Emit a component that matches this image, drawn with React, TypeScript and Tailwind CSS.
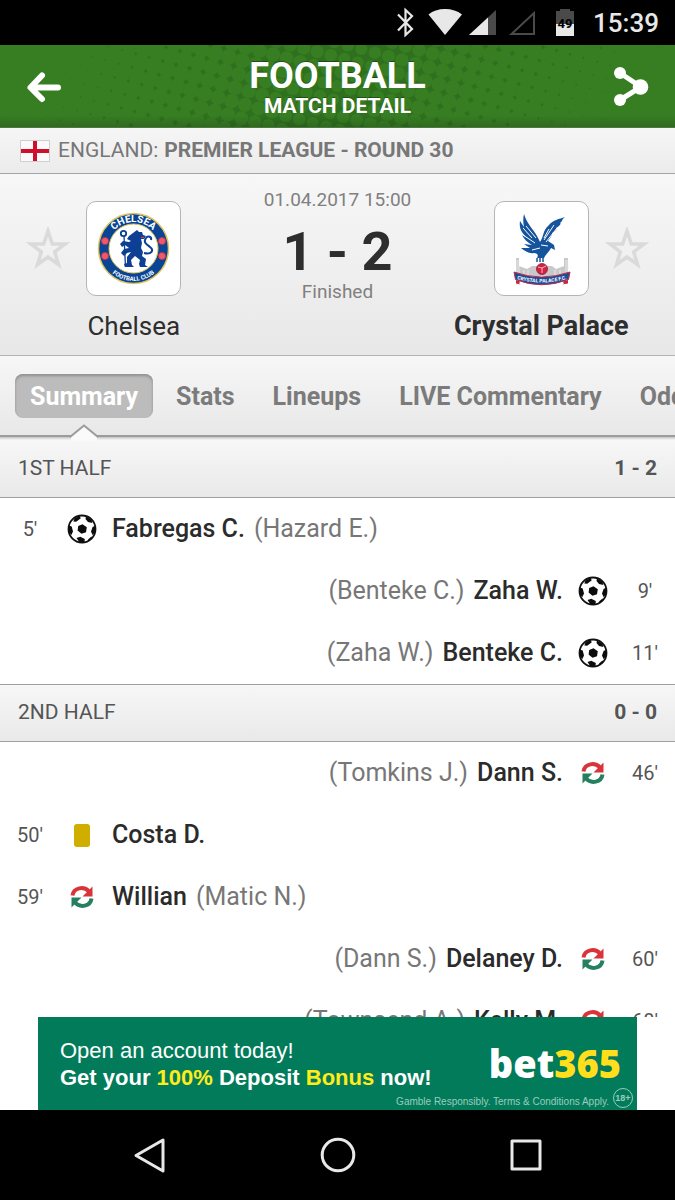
type EventKind = "goal" | "yellow" | "sub";

type MatchEvent = {
  minute: string;
  side: "home" | "away";
  kind: EventKind;
  player: string;
  other?: string;
};

const firstHalf: MatchEvent[] = [
  { minute: "5'", side: "home", kind: "goal", player: "Fabregas C.", other: "(Hazard E.)" },
  { minute: "9'", side: "away", kind: "goal", player: "Zaha W.", other: "(Benteke C.)" },
  { minute: "11'", side: "away", kind: "goal", player: "Benteke C.", other: "(Zaha W.)" },
];

const secondHalf: MatchEvent[] = [
  { minute: "46'", side: "away", kind: "sub", player: "Dann S.", other: "(Tomkins J.)" },
  { minute: "50'", side: "home", kind: "yellow", player: "Costa D." },
  { minute: "59'", side: "home", kind: "sub", player: "Willian", other: "(Matic N.)" },
  { minute: "60'", side: "away", kind: "sub", player: "Delaney D.", other: "(Dann S.)" },
  { minute: "68'", side: "away", kind: "sub", player: "Kelly M.", other: "(Townsend A.)" },
];

const tabs = ["Summary", "Stats", "Lineups", "LIVE Commentary", "Odds"];

// light dots on a dark ground, growing outwards until they close up
function headerDots() {
  const dots: { x: number; y: number; r: number }[] = [];
  const angle = (15 * Math.PI) / 180;
  for (let i = -30; i <= 30; i++) {
    for (let j = -14; j <= 14; j++) {
      const x = 337 + (i * Math.cos(angle) - j * Math.sin(angle)) * 14;
      const y = 41 + (i * Math.sin(angle) + j * Math.cos(angle)) * 14;
      if (x < -15 || x > 690 || y < -15 || y > 97) continue;
      dots.push({ x, y, r: Math.min(10.5, 6 + Math.abs(x - 337 - (41 - y) * 0.6) * 0.0135) });
    }
  }
  return dots;
}

function StatusBar() {
  return (
    <div className="flex h-[45px] shrink-0 items-center justify-end bg-black pr-4 text-[26px] leading-none font-medium text-[#e8e8e8]">
      <svg width="200" height="45" viewBox="0 0 200 45" aria-hidden="true">
        <path d="M6 14.500 20 29l-6.500 6V10l6.500 6L6 30.500" fill="none" stroke="#e8e8e8" strokeWidth="2.200" />
        <path d="M36.500 14.500Q43 9 53 9T70 14.500L53 35Z" fill="#e8e8e8" />
        <path d="M104 10v25H77z" fill="#4a4a4a" />
        <path d="M96 17.500V35H77z" fill="#e8e8e8" />
        <path d="M142 13v21h-22.500z" fill="none" stroke="#4a4a4a" strokeWidth="2" />
        <path d="M164 11h4V9h10v2h4v13h-18z" fill="#4a4a4a" />
        <path d="M164 24h18v12h-18z" fill="#e8e8e8" />
        <text x="173" y="28" textAnchor="middle" fontSize="13" fontWeight="700" fill="#000">49</text>
      </svg>
      <span className="ml-px">15:39</span>
    </div>
  );
}

function Header() {
  return (
    <header className="relative flex h-[83px] shrink-0 items-center justify-between overflow-hidden border-b border-[#4d7a42] bg-[#2f701f] px-6 text-white">
      <svg className="absolute inset-0 h-full w-full" viewBox="0 0 675 82" preserveAspectRatio="xMidYMid slice" aria-hidden="true">
        {headerDots().map((d, i) => (
          <circle key={i} cx={d.x} cy={d.y} r={d.r} fill="#377e23" />
        ))}
      </svg>
      <div className="absolute inset-x-0 bottom-0 h-3 bg-linear-to-b from-transparent to-black/15" />
      <button type="button" aria-label="Back" className="relative">
        <svg width="40" height="40" viewBox="0 0 40 40" fill="none" stroke="#fff" strokeWidth="6" strokeLinecap="round" strokeLinejoin="round">
          <path d="M34 21.500H7M18 9.500 6.500 21.500 18 33" />
        </svg>
      </button>
      <div className="relative pt-1 text-center font-bold text-shadow-[0_-1px_0_rgb(0_0_0/0.35)]">
        <h1 className="text-[36px] leading-9">FOOTBALL</h1>
        <p className="text-[21px] leading-6">MATCH DETAIL</p>
      </div>
      <button type="button" aria-label="Share" className="relative">
        <svg width="40" height="40" viewBox="0 0 40 40" fill="#fff">
          <path d="M9 7 30 21 9 34" fill="none" stroke="#fff" strokeWidth="5" />
          <circle cx="9" cy="7" r="6" />
          <circle cx="9" cy="34" r="6" />
          <circle cx="29.500" cy="21" r="7.800" />
        </svg>
      </button>
    </header>
  );
}

function Star({ team }: { team: string }) {
  return (
    <button type="button" aria-label={`Follow ${team}`}>
      <svg width="44" height="44" viewBox="0 0 44 44" fill="none" stroke="#dadada" strokeWidth="3.500">
        <path d="M22 4 26.300 17H39L28.700 24.800 32.500 37.500 22 30 11.500 37.500 15.300 24.800 5 17H17.700Z" />
      </svg>
    </button>
  );
}

function ChelseaCrest() {
  return (
    <svg width="93" height="93" viewBox="0 0 93 93" role="img" aria-label="Chelsea crest">
      <defs>
        <path id="che-top" d="M20 46.500a26.500 26.500 0 0 1 53 0" />
        <path id="che-bottom" d="M14 46.500a32.500 32.500 0 0 0 65 0" />
      </defs>
      <circle cx="46.500" cy="46.500" r="35" fill="#0a4595" stroke="#e0c65a" strokeWidth="1.500" />
      <circle cx="46.500" cy="46.500" r="24.500" fill="#fff" stroke="#e0c65a" strokeWidth="1" />
      <text fontSize="10" fontWeight="700" fill="#fff" textAnchor="middle">
        <textPath href="#che-top" startOffset="50%">CHELSEA</textPath>
      </text>
      <text fontSize="6" fontWeight="700" fill="#fff" textAnchor="middle">
        <textPath href="#che-bottom" startOffset="50%">FOOTBALL CLUB</textPath>
      </text>
      {[[18, 39], [18, 54], [75, 39], [75, 54]].map(([x, y]) => (
        <circle key={`${x}-${y}`} cx={x} cy={y} r="3.500" fill="#ee5a6b" stroke="#c9304c" strokeWidth="0.800" />
      ))}
      <g fill="#0d3f94">
        <path d="M46 31l4-3 2 2 3 0 1 3 3 1-2 3-3 0 1 4-1 5 2 4-1 4 4 3-1 6 3 2h-8l-1-3 1-4-5-4-4 4 1 5 2 2h-9l-1-3 3-1 0-6 4-5-4 1-3 3-3-3 3-4 5-1-4-3-3 2-2-3 3-3 6 1 2-1-4-2 2-3z" />
        <path d="M57 51c8 2 10-3 6-6s-7-5-4-9c2-3 6-1 5 2" fill="none" stroke="#0d3f94" strokeWidth="2" />
        <path d="M37 34 38.500 65" stroke="#0d3f94" strokeWidth="1.300" />
        <circle cx="36.500" cy="31.500" r="2.700" fill="none" stroke="#0d3f94" strokeWidth="1.800" />
      </g>
      <path d="M54 35.500l3 0" stroke="#e2404f" strokeWidth="1" />
    </svg>
  );
}

function PalaceCrest() {
  return (
    <svg width="93" height="93" viewBox="0 0 93 93" role="img" aria-label="Crystal Palace crest">
      <defs>
        <path id="cry-ribbon" d="M17 75.500Q46 85.500 77 75.500" />
      </defs>
      <path d="M21 56h3v8l8 3 5-3h20l4 3 8-3v-8h4v18H21z" fill="#c9c9cb" />
      <path d="M22 58v15M24 58v15M71 58v15M73 58v15M29 68v5M33 68v5M60 68v5M65 68v5" stroke="#f3f3f3" strokeWidth="0.700" />
      <g fill="#16539d">
        <path d="M29 12C32 23 40 28 45 40C49 35 47 29 54 23C58 18 64 17 70 15C66 18 68 19 65 21C67 21 64 25 61 26C63 27 59 30 57 31C58 33 54 37 53 39L59 43L60 48L56 46C54 50 51 52 49 56H42C44 53 42 51 39 51C34 52 30 49 26 46L35 46L29 42L37 43C32 40 29 37 27 33L33 36C26 31 24 26 25 19L29 25C28 20 28 16 29 12Z" />
      </g>
      <path d="M28 26l9 10M28 33l12 8M31 24l10 12M49 38l10-15M51 40l11-14M49 36l5-9M46 43l7 1M37 48l8-2" fill="none" stroke="#fff" strokeWidth="1" />
      <path d="M42 56v4M45 55v5M48 55v5" stroke="#16539d" strokeWidth="1.500" />
      <circle cx="47" cy="67" r="5.500" fill="#d3213f" stroke="#8e2038" strokeWidth="0.800" />
      <path d="M43 65l4 1 4-2M47 66v5" stroke="#fff" strokeWidth="0.700" fill="none" />
      <path d="M19 70Q46 80 75 70L73.500 77.500Q46 88 20.500 77.500Z" fill="#1b4e99" stroke="#c42744" strokeWidth="1" />
      <path d="M21 78l4 1.500-1 3 2 0-5-1zM73 78l-5 1.500 1 3-2 0 6-1z" fill="#c42744" />
      <text fontSize="5" fontWeight="700" fill="#fff" textAnchor="middle">
        <textPath href="#cry-ribbon" startOffset="50%">CRYSTAL PALACE F.C.</textPath>
      </text>
    </svg>
  );
}

function Ball() {
  return (
    <svg width="30" height="30" viewBox="0 0 30 30" role="img" aria-label="Goal">
      <circle cx="15" cy="15" r="13.500" fill="#fff" stroke="#111" strokeWidth="1.800" />
      <g fill="#0c0c0c">
        <path d="M15.500 10.300l4.300 2.900-.8 5-4.500 1.500-3.900-3.200.6-4.400z" />
        <path d="M7.500 4.500 12.500 2l1.300 2.200-4.600 3.600-2.900-.4zM19 2.500l5.500 3.200.8 3.300-4.300-1-2.500-3z" />
        <path d="M1.800 11.500l2.900 1 1.300 5-1.600 3.500-2.400-2.500zM28.300 12l-2.600.8-1.700 4.700 1.500 3.600 2.500-2.600z" />
        <path d="M9.500 24l3.800-1.300 4.500 2.300-.3 3.200-5 .2zM21 25.500l3.500-3 .6 1.500-3 2.800z" />
      </g>
    </svg>
  );
}

function SubIcon() {
  return (
    <svg width="24" height="24" viewBox="0 0 24 24" role="img" aria-label="Substitution">
      <path d="M2.500 10.500C3.500 2.500 14 .800 19 6.500" fill="none" stroke="#d8343a" strokeWidth="4" />
      <path d="M22.500 1.500v10H12.500z" fill="#d8343a" />
      <path d="M21.500 13.500C20.500 21.500 10 23.200 5 17.500" fill="none" stroke="#258060" strokeWidth="4" />
      <path d="M1.500 22.500v-10H11.500z" fill="#258060" />
    </svg>
  );
}

function EventIcon({ kind }: { kind: EventKind }) {
  if (kind === "goal") return <Ball />;
  if (kind === "sub") return <SubIcon />;
  return <span role="img" aria-label="Yellow card" className="h-[23px] w-4 rounded-[3px] bg-[#cfae00]" />;
}

function EventRow({ event }: { event: MatchEvent }) {
  const away = event.side === "away";
  return (
    <li className={away ? "flex h-[62px] flex-row-reverse items-center" : "flex h-[62px] items-center"}>
      <span className="w-[60px] text-center text-[20px] text-[#555]">{event.minute}</span>
      <span className="flex w-11 justify-center">
        <EventIcon kind={event.kind} />
      </span>
      <span className={away ? "flex flex-row-reverse gap-[9px] px-2 text-[25px]" : "flex gap-[9px] px-2 text-[25px]"}>
        <span className="font-medium text-[#2b2b2b]">{event.player}</span>
        {event.other && <span className="text-[#777]">{event.other}</span>}
      </span>
    </li>
  );
}

function Half({ title, score, events, ruled }: { title: string; score: string; events: MatchEvent[]; ruled?: boolean }) {
  return (
    <section>
      <div
        className={`flex h-[58px] items-center justify-between border-b border-[#a0a0a0] bg-linear-to-b from-[#f7f7f7] to-[#e9e9e9] px-[18px] text-[21px] text-[#555] ${ruled ? "border-t" : ""}`}
      >
        <h2>{title}</h2>
        <span className="font-bold">{score}</span>
      </div>
      <ul>
        {events.map((e) => (
          <EventRow key={e.minute} event={e} />
        ))}
      </ul>
    </section>
  );
}

function Banner() {
  return (
    <div className="flex h-[93px] shrink-0 justify-center bg-white px-[38px]">
      <a
        href="#bet365"
        className="flex w-full max-w-[600px] justify-between bg-[#027b5b] pl-[22px] font-['Liberation_Sans',Arial,sans-serif] text-[22px] leading-[27px] text-white"
      >
        <div className="pt-5 whitespace-nowrap">
          <p>Open an account today!</p>
          <p className="font-bold">
            Get your <span className="text-[#ffec1a]">100%</span> Deposit <span className="text-[#ffec1a]">Bonus</span> now!
          </p>
        </div>
        <div className="-ml-20 flex flex-col items-end justify-between pt-7 pr-1">
          <span className="pr-3 font-['Open_Sans',sans-serif] text-[38px] leading-9 font-extrabold">
            bet<span className="text-[#ffdf1b]">365</span>
          </span>
          <span className="flex items-center gap-1 pb-[2px] text-[10px] leading-none whitespace-nowrap text-[#9accbd]">
            Gamble Responsibly. Terms &amp; Conditions Apply.
            <span className="-mt-2 flex size-5 items-center justify-center rounded-full border border-[#9accbd] text-[9px] font-bold">18+</span>
          </span>
        </div>
      </a>
    </div>
  );
}

function NavBar() {
  return (
    <nav className="flex h-[90px] shrink-0 items-center justify-center gap-[148px] bg-black">
      <button type="button" aria-label="Back">
        <svg width="40" height="40" viewBox="0 0 40 40" fill="none" stroke="#e8e8e8" strokeWidth="3" strokeLinejoin="round">
          <path d="M33 5v31L6 20.500z" />
        </svg>
      </button>
      <button type="button" aria-label="Home">
        <svg width="40" height="40" viewBox="0 0 40 40" fill="none" stroke="#e8e8e8" strokeWidth="3">
          <circle cx="20" cy="20" r="15.800" />
        </svg>
      </button>
      <button type="button" aria-label="Recent apps">
        <svg width="40" height="40" viewBox="0 0 40 40" fill="none" stroke="#e8e8e8" strokeWidth="3" strokeLinejoin="round">
          <path d="M6 6h28v28H6z" />
        </svg>
      </button>
    </nav>
  );
}

function App() {
  return (
    <div className="flex h-screen flex-col overflow-hidden bg-white font-[Roboto,sans-serif]">
      <StatusBar />
      <Header />

      <div className="flex h-[46px] shrink-0 items-center border-b border-[#a5a5a5] bg-linear-to-b from-[#f6f6f6] to-[#ebebeb] px-5 text-[21px] whitespace-nowrap text-[#777]">
        <svg width="30" height="22" viewBox="0 0 30 22" className="mr-2" role="img" aria-label="England">
          <path d="M.5 .5h29v21H.5z" fill="#fafafa" stroke="#cfcfcf" />
          <path d="M15 1v20M1 11h28" stroke="#d0102a" strokeWidth="4" />
        </svg>
        <span className="mr-[6px]">ENGLAND:</span>
        <span className="font-bold">PREMIER LEAGUE - ROUND 30</span>
      </div>

      <div className="grid h-[182px] shrink-0 grid-cols-[1fr_140px_1fr] border-b border-[#b5b5b5] bg-linear-to-b from-[#f7f7f7] to-[#e8e8e8] pt-3 text-[#2e2e2e]">
        <div className="flex flex-col items-center pt-[15px]">
          <div className="flex items-center gap-4">
            <Star team="Chelsea" />
            <div className="rounded-[10px] border border-[#b5b5b5] bg-white">
              <ChelseaCrest />
            </div>
            <span className="w-11" />
          </div>
          <p className="mt-3 text-[26px] leading-9">Chelsea</p>
        </div>
        <div className="flex flex-col items-center whitespace-nowrap text-[#808080]">
          <p className="text-[19px] leading-7">01.04.2017 15:00</p>
          <p className="pt-[10px] text-[54px] leading-[56px] font-bold text-[#2e2e2e]">1 - 2</p>
          <p className="text-[19px] leading-6">Finished</p>
        </div>
        <div className="flex flex-col items-center pt-[15px]">
          <div className="flex items-center gap-4">
            <span className="w-11" />
            <div className="rounded-[10px] border border-[#b5b5b5] bg-white">
              <PalaceCrest />
            </div>
            <Star team="Crystal Palace" />
          </div>
          <p className="mt-3 text-[27px] leading-9 font-bold">Crystal Palace</p>
        </div>
      </div>

      <div className="flex h-[81px] shrink-0 items-center gap-2 overflow-x-clip border-b-2 border-[#9c9c9c] bg-linear-to-b from-[#f7f7f7] to-[#e8e8e8] pl-[15px] text-[25px] font-bold whitespace-nowrap text-[#7b7b7b]">
        {tabs.map((tab, i) =>
          i === 0 ? (
            <button key={tab} type="button" className="relative h-11 rounded-lg bg-[#bcbcbc] px-[15px] pt-[3px] text-white shadow-[inset_0_2px_3px_#8f8f8f]">
              {tab}
              <svg width="30" height="17" viewBox="0 0 30 17" className="absolute top-[50px] left-1/2 -translate-x-1/2" aria-hidden="true">
                <path d="M2 13 15 1.500 28 13v4H2z" fill="#fafafa" />
                <path d="M1 13 15 1.500 29 13" fill="none" stroke="#9c9c9c" strokeWidth="2" />
              </svg>
            </button>
          ) : (
            <button key={tab} type="button" className="h-11 px-[15px] pt-[3px]">
              {tab}
            </button>
          )
        )}
      </div>
      <div className="h-[3px] shrink-0 bg-linear-to-b from-[#c4c4c4] to-[#f7f7f7]" />

      <main className="min-h-0 flex-1 overflow-hidden">
        <Half title="1ST HALF" score="1 - 2" events={firstHalf} />
        <Half title="2ND HALF" score="0 - 0" events={secondHalf} ruled />
      </main>

      <Banner />
      <NavBar />
    </div>
  );
}

export default App;
